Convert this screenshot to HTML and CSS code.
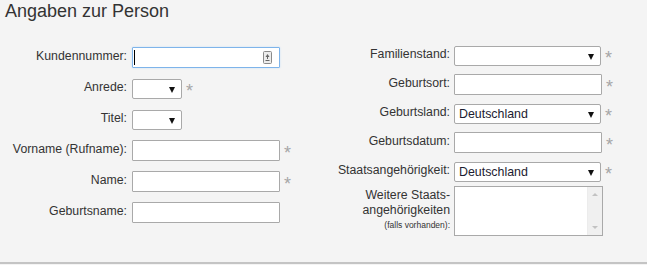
FILE: index.html
```html
<!DOCTYPE html>
<html lang="de">
<head>
    <meta charset="UTF-8">
    <title>Angaben zur Person</title>
    <link rel="stylesheet" href="styles.css">
</head>
<body>
    <div class="panel">
        <h1>Angaben zur Person</h1>
        <div class="columns">
            <div class="col col-left">
                <div class="row">
                    <label class="label">Kundennummer:</label>
                    <div class="focus-field">
                        <span class="caret"></span>
                        <input type="text" class="plain">
                        <svg class="key-icon" width="9" height="13" viewBox="0 0 9 13">
                            <rect x="0.5" y="0.5" width="8" height="12" rx="1" fill="#ececec" stroke="#8a8a8a"/>
                            <path d="M4.5 3 L6.5 6 L2.5 6 Z" fill="#666"/>
                            <rect x="4" y="6" width="1" height="2" fill="#666"/>
                            <rect x="2.5" y="9" width="4" height="1" fill="#666"/>
                        </svg>
                    </div>
                </div>
                <div class="row">
                    <label class="label">Anrede:</label>
                    <span class="select small"><select><option></option></select></span>
                    <span class="req">*</span>
                </div>
                <div class="row">
                    <label class="label">Titel:</label>
                    <span class="select small"><select><option></option></select></span>
                </div>
                <div class="row">
                    <label class="label">Vorname (Rufname):</label>
                    <input type="text" class="text">
                    <span class="req">*</span>
                </div>
                <div class="row">
                    <label class="label">Name:</label>
                    <input type="text" class="text">
                    <span class="req">*</span>
                </div>
                <div class="row">
                    <label class="label">Geburtsname:</label>
                    <input type="text" class="text">
                </div>
            </div>
            <div class="col col-right">
                <div class="row">
                    <label class="label">Familienstand:</label>
                    <span class="select wide"><select><option></option></select></span>
                    <span class="req">*</span>
                </div>
                <div class="row">
                    <label class="label">Geburtsort:</label>
                    <input type="text" class="text">
                    <span class="req">*</span>
                </div>
                <div class="row">
                    <label class="label">Geburtsland:</label>
                    <span class="select wide"><select><option>Deutschland</option></select></span>
                    <span class="req">*</span>
                </div>
                <div class="row">
                    <label class="label">Geburtsdatum:</label>
                    <input type="text" class="text">
                    <span class="req">*</span>
                </div>
                <div class="row">
                    <label class="label">Staatsangehörigkeit:</label>
                    <span class="select wide"><select><option>Deutschland</option></select></span>
                    <span class="req">*</span>
                </div>
                <div class="row row-area">
                    <label class="label label-multi">Weitere Staats-<br>angehörigkeiten<br><small>(falls vorhanden):</small></label>
                    <div class="area">
                        <div class="area-text"></div>
                        <div class="scrollbar">
                            <span class="arrow up"></span>
                            <span class="arrow down"></span>
                        </div>
                    </div>
                </div>
            </div>
        </div>
    </div>
</body>
</html>
```

FILE: styles.css
```css
body {
    margin: 0;
    padding: 0;
    background-color: #f4f4f4;
    font-family: "Liberation Sans", Arial, sans-serif;
    color: #333;
}

.panel {
    height: 262px;
    border-bottom: 2px solid #c4c4c4;
}

h1 {
    margin: 0;
    padding: 0 5px;
    height: 24px;
    line-height: 22px;
    font-size: 18px;
    font-weight: normal;
    color: #333;
}

.columns {
    display: flex;
}

.col-left {
    width: 300px;
    padding-top: 18px;
}

.col-right {
    padding-top: 17px;
}

.row {
    display: flex;
    align-items: center;
    height: 31px;
}

.col-right .row {
    height: 29px;
}

.label {
    font-size: 12.3px;
    text-align: right;
    margin-bottom: 4px;
    color: #333;
}

.col-left .label {
    width: 127px;
    margin-right: 5px;
}

.col-right .label {
    width: 150px;
    margin-right: 4px;
}

.text {
    box-sizing: border-box;
    width: 148px;
    height: 21px;
    margin: 0;
    border: 1px solid #a9a9a9;
    border-radius: 1px;
    background: #fff;
    font-family: inherit;
    font-size: 12.4px;
}

.focus-field {
    position: relative;
    box-sizing: border-box;
    display: flex;
    align-items: center;
    width: 148px;
    height: 21px;
    border: 1px solid #7eb4ea;
    border-radius: 1px;
    background: #fff;
    box-shadow: 0 0 2px #c3dcf5;
}

.plain {
    border: none;
    outline: none;
    background: transparent;
    flex: 1;
    width: 100px;
    padding: 0;
}

.caret {
    width: 1px;
    height: 15px;
    margin-left: 1px;
    background: #000;
}

.key-icon {
    margin-right: 7px;
}

.select {
    position: relative;
    display: inline-block;
    height: 20px;
}

.select.small {
    width: 50px;
}

.select.wide {
    width: 147px;
}

.select select {
    -webkit-appearance: none;
    appearance: none;
    box-sizing: border-box;
    width: 100%;
    height: 20px;
    margin: 0;
    padding: 0 0 0 4px;
    border: 1px solid #a9a9a9;
    border-radius: 2px;
    background: #fff;
    font-family: inherit;
    font-size: 12.4px;
    color: #1c1c30;
}

.select::after {
    content: "";
    position: absolute;
    right: 7px;
    top: 8px;
    border-top: 6px solid #111;
    border-left: 3.5px solid transparent;
    border-right: 3.5px solid transparent;
    pointer-events: none;
}

.req {
    margin-left: 4px;
    margin-top: 4px;
    font-size: 18px;
    line-height: 16px;
    color: #a6a6a6;
}

.row-area {
    align-items: flex-start;
}

.col-right .row-area {
    height: 50px;
}

.label-multi {
    margin-top: 2px;
    line-height: 15px;
}

.label-multi small {
    display: block;
    font-size: 8.5px;
    line-height: 11px;
    margin-top: 2px;
}

.area {
    box-sizing: border-box;
    display: flex;
    width: 149px;
    height: 50px;
    border: 1px solid #a9a9a9;
    background: #fff;
}

.area-text {
    flex: 1;
}

.scrollbar {
    position: relative;
    width: 14px;
    background: #f0f0f0;
    border-left: 1px solid #ececec;
}

.arrow {
    position: absolute;
    left: 4px;
    border-left: 3px solid transparent;
    border-right: 3px solid transparent;
}

.arrow.up {
    top: 6px;
    border-bottom: 3px solid #c2c2c2;
}

.arrow.down {
    bottom: 6px;
    border-top: 3px solid #c2c2c2;
}
```
